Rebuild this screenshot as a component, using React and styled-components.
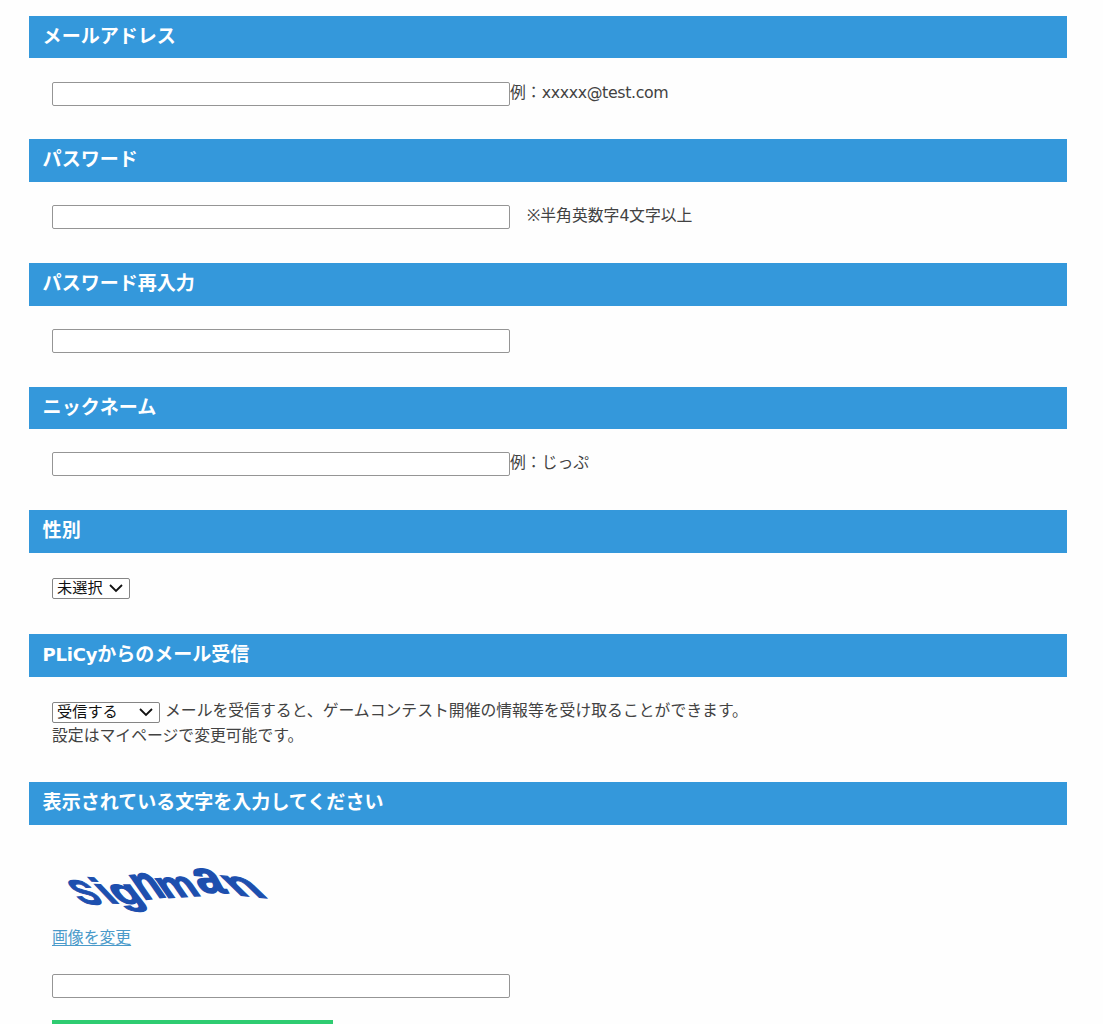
import React from "react";
import styled, { createGlobalStyle } from "styled-components";

const GlobalStyle = createGlobalStyle`
  * { box-sizing: border-box; }
  html { overflow: hidden; height: 1024px; }
  body {
    margin: 0;
    height: 1024px;
    overflow: hidden;
    background: #fefefe;
    color: #424242;
    font-family: "Noto Sans", "Noto Sans CJK JP", sans-serif;
    font-size: 15.84px;
    line-height: 24.6px;
  }
`;

const Form = styled.form`
  display: flex;
  flex-direction: column;
  width: 1038px;
  margin: 15.6px 0 0 29px;
`;

const Section = styled.section`
  display: flex;
  flex-direction: column;
  height: ${(p) => p.$height || 123.7}px;
`;

const Heading = styled.h2`
  flex: none;
  margin: 0;
  height: 42.6px;
  padding-left: 13.6px;
  background: #3498db;
  color: #fff;
  font-size: 19.05px;
  font-weight: 700;
  line-height: 40px;
  white-space: nowrap;
`;

const HeadingLatin = styled.span`
  font-family: "DejaVu Sans", sans-serif;
  font-size: 18px;
  letter-spacing: -0.25px;
`;

const Body = styled.div`
  padding: ${(p) => p.$top || 23.4}px 0 0 23px;
`;

const Row = styled.div`
  display: flex;
  align-items: flex-start;
  white-space: nowrap;
`;

const TextInput = styled.input`
  display: block;
  flex: none;
  width: 458px;
  height: 24px;
  padding: 1px 4px;
  border: 1px solid #959595;
  border-radius: 2px;
  background: #fff;
  font: inherit;
  outline: none;
`;

const Note = styled.span`
  margin-left: ${(p) => p.$gap || 0}px;
  margin-top: ${(p) => p.$shift || -1.8}px;
`;

const Latin = styled.span`
  font-family: "DejaVu Sans", sans-serif;
  font-size: 15.8px;
  letter-spacing: -0.35px;
`;

const SelectBox = styled.span`
  display: grid;
  flex: none;
  align-items: center;
  width: ${(p) => p.$width}px;
  height: 21px;
  color: #111;

  > * { grid-area: 1 / 1; }
  > svg { justify-self: end; margin-right: 7px; pointer-events: none; }
`;

const Select = styled.select`
  appearance: none;
  width: 100%;
  height: 21px;
  padding: 0 0 2px 4px;
  border: 1px solid #858585;
  border-radius: 2px;
  background: #fff;
  color: #111;
  font: inherit;
  font-size: 15.2px;
  line-height: 17px;
`;

const Captcha = styled.svg`
  display: block;
  width: 230px;
  height: 70px;
  overflow: visible;
  fill: #1d4fae;
  stroke: #1d4fae;
  stroke-width: 3.5px;
  font-family: "Liberation Sans", Arial, sans-serif;
  font-size: 100px;
  font-weight: 700;
`;

const ReloadLink = styled.a`
  display: block;
  width: max-content;
  color: #4a9aca;
  text-decoration: underline;
  text-underline-offset: 2px;
  text-decoration-thickness: 1px;
`;

const CaptchaInput = styled(TextInput)`
  margin-top: 24.4px;
`;

const Submit = styled.button`
  display: block;
  width: 281px;
  height: 48px;
  margin-top: 22px;
  border: 0;
  background: #2ecc71;
`;

const glyphs = [
  ["S", "1.12 0.1 0.75 1.02 92 144"],
  ["i", "1.3 0.05 1 1.06 178 144"],
  ["g", "1.36 0 0.83 1.08 209 146"],
  ["n", "1.2 -0.15 0.93 1.35 280 134"],
  ["m", "1.24 -0.08 0.75 1.08 347 129"],
  ["a", "1.46 0.05 0.73 1.34 454 112"],
  ["n", "1.6 0.17 1.15 1.12 562 120"],
];

function Dropdown({ width, label }) {
  return (
    <SelectBox $width={width}>
      <Select defaultValue={label}>
        <option>{label}</option>
      </Select>
      <svg width="14" height="9" viewBox="0 0 14 9">
        <path d="M1 1 L7 7 L13 1" fill="none" stroke="#111" strokeWidth="1.8" />
      </svg>
    </SelectBox>
  );
}

export default function App() {
  return (
    <>
      <GlobalStyle />
      <Form>
        <Section>
          <Heading>メールアドレス</Heading>
          <Body>
            <Row>
              <TextInput type="email" />
              <Note>例：<Latin>xxxxx@test.com</Latin></Note>
            </Row>
          </Body>
        </Section>
        <Section>
          <Heading>パスワード</Heading>
          <Body>
            <Row>
              <TextInput type="password" />
              <Note $gap={17}>※半角英数字<Latin>4</Latin>文字以上</Note>
            </Row>
          </Body>
        </Section>
        <Section>
          <Heading>パスワード再入力</Heading>
          <Body>
            <TextInput type="password" />
          </Body>
        </Section>
        <Section>
          <Heading>ニックネーム</Heading>
          <Body $top={23}>
            <Row>
              <TextInput type="text" />
              <Note>例：じっぷ</Note>
            </Row>
          </Body>
        </Section>
        <Section>
          <Heading>性別</Heading>
          <Body $top={25}>
            <Dropdown width={78} label="未選択" />
          </Body>
        </Section>
        <Section $height={148.2}>
          <Heading><HeadingLatin>PLiCy</HeadingLatin>からのメール受信</Heading>
          <Body $top={25}>
            <Row>
              <Dropdown width={108} label="受信する" />
              <Note $gap={5} $shift={-3.8}>
                メールを受信すると、ゲームコンテスト開催の情報等を受け取ることができます。
              </Note>
            </Row>
            設定はマイページで変更可能です。
          </Body>
        </Section>
        <Section $height={260}>
          <Heading>表示されている文字を入力してください</Heading>
          <Body $top={30}>
            <Captcha viewBox="6 0 690 210" role="img">
              {glyphs.map(([char, matrix], i) => (
                <text key={i} transform={`matrix(${matrix})`}>{char}</text>
              ))}
            </Captcha>
            <ReloadLink href="#">画像を変更</ReloadLink>
            <CaptchaInput type="text" />
            <Submit type="button" />
          </Body>
        </Section>
      </Form>
    </>
  );
}
